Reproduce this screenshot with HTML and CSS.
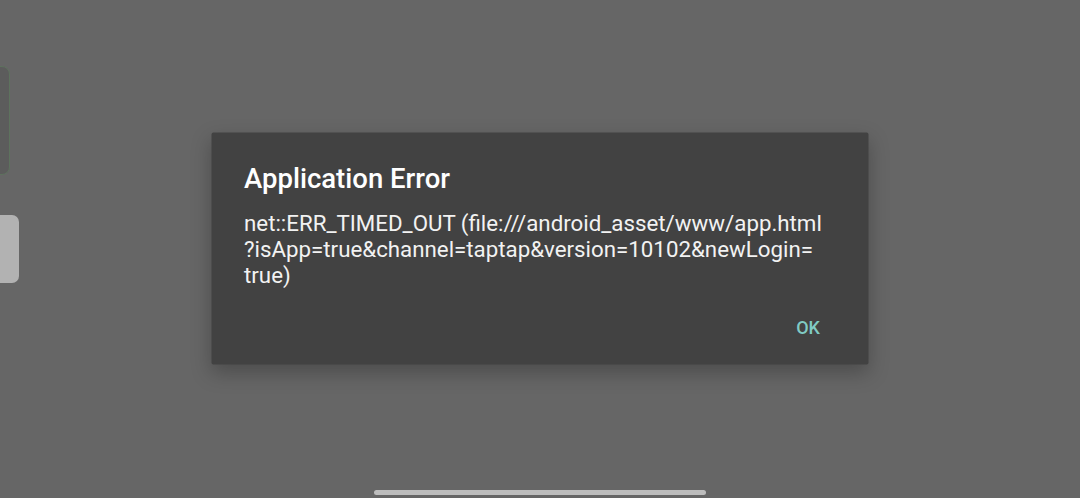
FILE: index.html
```html
<!DOCTYPE html>
<html lang="en">
<head>
    <meta charset="UTF-8">
    <title>Application Error</title>
    <link rel="stylesheet" href="styles.css">
</head>
<body>
    <!-- app content behind the scrim -->
    <div class="side-card"></div>
    <div class="side-tab"></div>

    <div class="scrim">
        <div class="dialog">
            <h1 class="dialog-title">Application Error</h1>
            <p class="dialog-message">net::ERR_TIMED_OUT (file:///android_asset/www/app.html<br>?isApp=true&amp;channel=taptap&amp;version=10102&amp;newLogin=<br>true)</p>
            <div class="dialog-actions">
                <button class="dialog-button">OK</button>
            </div>
        </div>
    </div>

    <div class="gesture-bar"></div>
</body>
</html>
```

FILE: styles.css
```css
body {
    margin: 0;
    height: 100vh;
    overflow: hidden;
    background: #666666;
    font-family: Roboto, 'Noto Sans', sans-serif;
}
.side-card {
    position: absolute;
    left: -10px;
    top: 66px;
    width: 18px;
    height: 107px;
    border: 1px solid #5e725e;
    border-radius: 8px;
    background: #5c5c5c;
}
.side-tab {
    position: absolute;
    left: -10px;
    top: 215px;
    width: 29px;
    height: 68px;
    border-radius: 7px;
    background: #b2b2b2;
}
.scrim {
    height: 100%;
    display: flex;
    justify-content: center;
    align-items: center;
}
.dialog {
    width: 657px;
    height: 232px;
    box-sizing: border-box;
    padding: 30px 34px 0 33px;
    background: #424242;
    border-radius: 2px;
    box-shadow: 0 8px 20px rgba(0, 0, 0, 0.25);
    display: flex;
    flex-direction: column;
    transform: translate(-0.5px, -0.5px);
}
.dialog-title {
    margin: 0;
    font-size: 27.5px;
    font-weight: 500;
    line-height: 31px;
    color: #ffffff;
}
.dialog-message {
    margin: 16px 0 0 0;
    font-size: 22.3px;
    line-height: 26px;
    color: #f2f2f2;
}
.dialog-actions {
    display: flex;
    justify-content: flex-end;
    margin-top: 24px;
}
.dialog-button {
    background: none;
    border: none;
    padding: 6px 13px;
    font-family: Roboto, 'Noto Sans', sans-serif;
    font-size: 18px;
    font-weight: 500;
    line-height: 20px;
    color: #80cbc4;
    margin-right: 1px;
}
.gesture-bar {
    position: absolute;
    left: 374px;
    top: 490px;
    width: 332px;
    height: 5px;
    border-radius: 3px;
    background: #bdbdbd;
}
```
